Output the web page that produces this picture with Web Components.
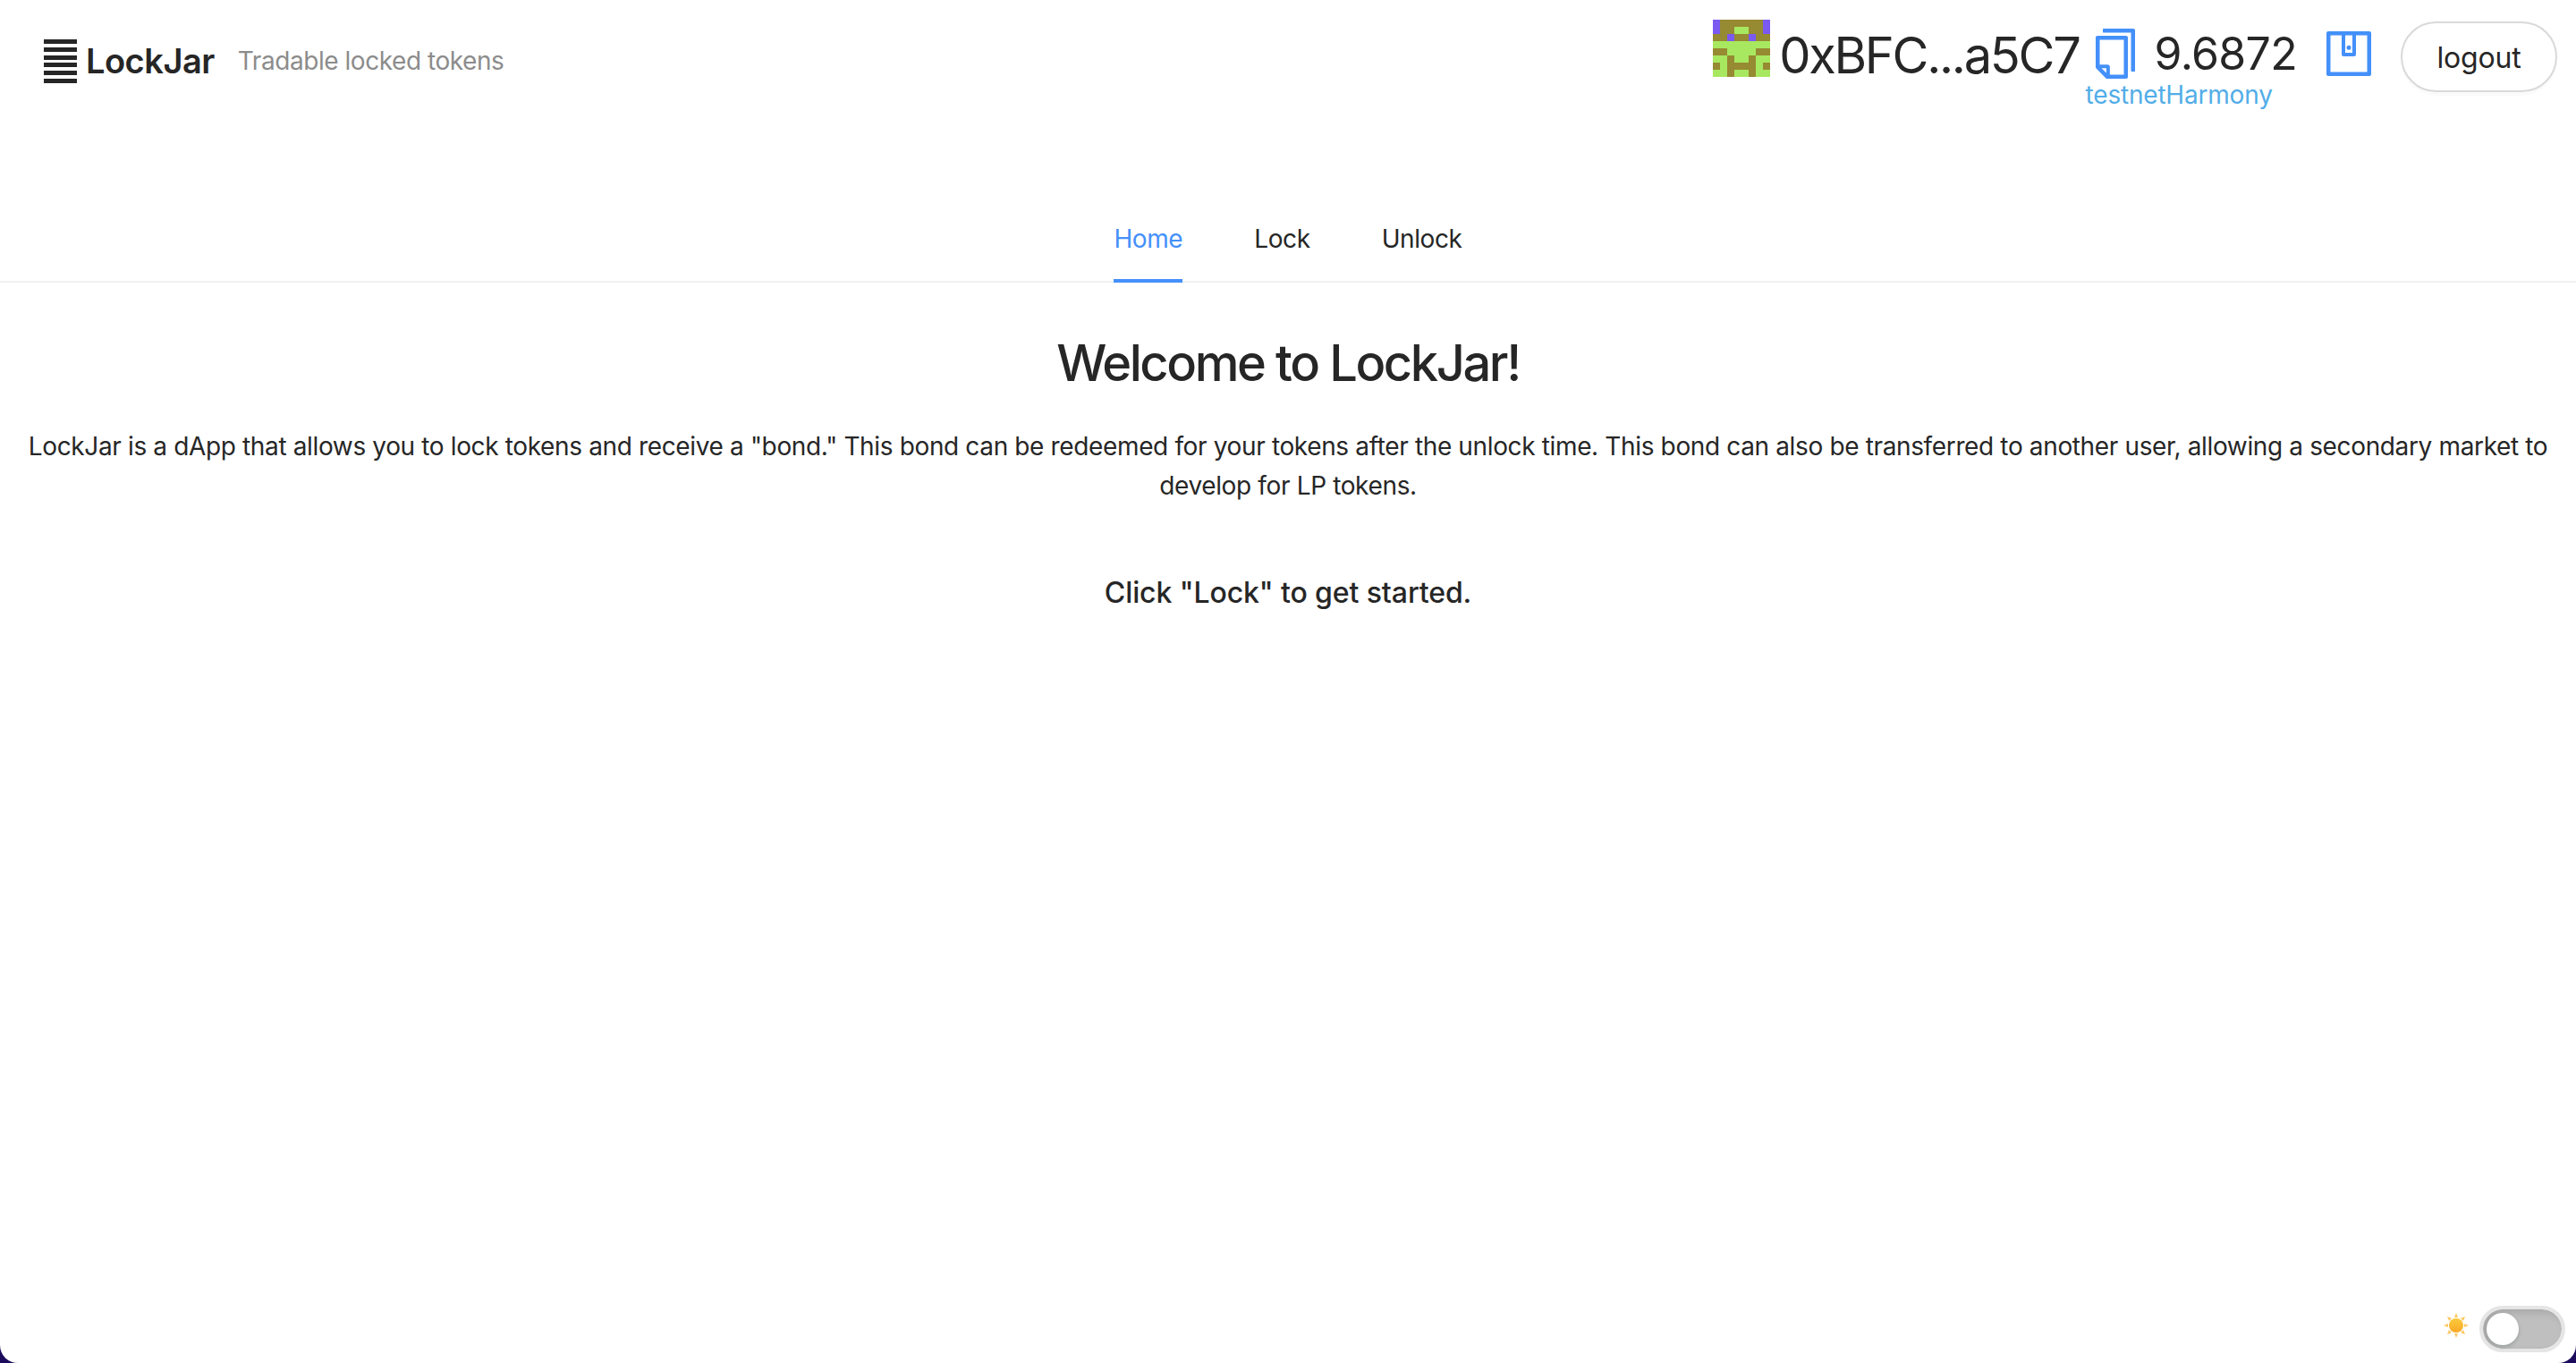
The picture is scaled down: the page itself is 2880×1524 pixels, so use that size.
<!DOCTYPE html>
<html>
<head>
<meta charset="utf-8">
<title>LockJar</title>
<style>
	html, body {
		margin: 0;
		height: 100%;
		background: #1c0b5c;
	}
	body {
		font-family: Inter, "Liberation Sans", sans-serif;
		color: #262626;
	}
</style>
</head>
<body>

<template id="jar-logo">
	<style>
		:host {
			display: flex;
			align-items: center;
		}
		.bars {
			display: flex;
			flex-direction: column;
			gap: 3.75px;
			width: 37px;
			margin-right: 10px;
		}
		.bars i {
			display: block;
			height: 5px;
			background: #262626;
		}
		.name {
			font-size: 38px;
			font-weight: 600;
			letter-spacing: -0.5px;
		}
		.tagline {
			font-size: 28px;
			color: #8c8c8c;
			letter-spacing: -0.45px;
			margin-left: 26px;
		}
	</style>
	<div class="bars"><i></i><i></i><i></i><i></i><i></i><i></i></div>
	<span class="name">LockJar</span>
	<span class="tagline">Tradable locked tokens</span>
</template>

<template id="jar-blockie">
	<style>
		:host {
			display: grid;
			grid-template-columns: repeat(8, 8px);
			grid-auto-rows: 8px;
			width: 64px;
			height: 64px;
		}
		i { display: block; }
		.p { background: #7a5af0; }
		.b { background: #968a32; }
		.g { background: #a8e860; }
	</style>
</template>

<template id="jar-account">
	<style>
		:host {
			display: flex;
			align-items: flex-start;
		}
		jar-blockie {
			margin-top: 22px;
			margin-right: 10px;
		}
		.address {
			font-size: 56px;
			line-height: 68px;
			letter-spacing: -2.3px;
			margin-top: 28px;
		}
		.copy {
			width: 56px;
			height: 56px;
			margin: 32px 0 0 12px;
			fill: #4490fa;
		}
		.funds {
			display: flex;
			flex-direction: column;
			margin-left: 16px;
		}
		.balance {
			font-size: 50px;
			line-height: 60px;
			letter-spacing: -0.7px;
			margin-top: 30px;
		}
		.network {
			font-size: 28px;
			line-height: 34px;
			letter-spacing: -0.2px;
			color: #52ade8;
			margin-left: -77px;
			margin-top: -1px;
		}
		.wallet {
			width: 56px;
			height: 56px;
			margin: 32px 0 0 30px;
			fill: #4490fa;
			transform: rotate(-90deg);
		}
		button {
			width: 175px;
			height: 79px;
			margin: 24px 0 0 30px;
			padding: 2px 0 0;
			border: 2px solid #d9d9d9;
			border-radius: 40px;
			background: #fff;
			font: 32px Inter, "Liberation Sans", sans-serif;
			letter-spacing: -0.2px;
			color: #262626;
			box-shadow: 0 4px 0 rgba(0, 0, 0, 0.015);
		}
	</style>
	<jar-blockie></jar-blockie>
	<span class="address">0xBFC...a5C7</span>
	<svg class="copy" viewBox="64 64 896 896"><path d="M832 64H296c-4.4 0-8 3.6-8 8v56c0 4.4 3.6 8 8 8h496v688c0 4.4 3.6 8 8 8h56c4.4 0 8-3.6 8-8V96c0-17.7-14.3-32-32-32zM704 192H192c-17.7 0-32 14.3-32 32v530.7c0 8.5 3.4 16.6 9.4 22.6l173.3 173.3c2.2 2.2 4.7 4 7.4 5.5v1.9h4.2c3.5 1.3 7.2 2 11 2H704c17.7 0 32-14.3 32-32V224c0-17.7-14.3-32-32-32zM350 856.2L263.9 770H350v86.2zM664 888H414V746c0-22.1-17.9-40-40-40H232V264h432v624z"/></svg>
	<div class="funds">
		<span class="balance">9.6872</span>
		<span class="network">testnetHarmony</span>
	</div>
	<svg class="wallet" viewBox="64 64 896 896"><path d="M880 112H144c-17.7 0-32 14.3-32 32v736c0 17.7 14.3 32 32 32h736c17.7 0 32-14.3 32-32V144c0-17.7-14.3-32-32-32zm-40 464H528V448h312v128zm0 264H184V184h656v200H496c-17.7 0-32 14.3-32 32v192c0 17.7 14.3 32 32 32h344v200zM580 512a40 40 0 1 0 80 0 40 40 0 1 0-80 0z"/></svg>
	<button>logout</button>
</template>

<template id="jar-header">
	<style>
		:host {
			display: flex;
			justify-content: space-between;
			align-items: flex-start;
			height: 136px;
			padding: 0 21px 0 49px;
		}
		.left {
			padding-top: 44px;
		}
	</style>
	<div class="left"><slot name="logo"></slot></div>
	<slot name="account"></slot>
</template>

<template id="jar-tabs">
	<style>
		:host {
			display: flex;
			justify-content: center;
			gap: 80px;
			margin-top: 92px;
			height: 86px;
			border-bottom: 2px solid #f0f0f0;
		}
	</style>
	<slot></slot>
</template>

<template id="jar-tab">
	<style>
		:host {
			display: block;
			height: 84px;
			font-size: 28px;
			line-height: 78px;
			letter-spacing: -0.4px;
			color: #262626;
		}
		:host([active]) {
			color: #4490fa;
			box-shadow: inset 0 -4px 0 #4490fa;
			height: 88px;
		}
	</style>
	<slot></slot>
</template>

<template id="jar-welcome">
	<style>
		:host {
			display: block;
			text-align: center;
			padding: 0 24px;
		}
		h2 {
			margin: 57px 0 0;
			font-size: 56px;
			line-height: 66px;
			font-weight: 500;
			letter-spacing: -2.4px;
		}
		p {
			margin: 38px 0 0;
			font-size: 28px;
			line-height: 44px;
			letter-spacing: -0.36px;
		}
		h4 {
			margin: 78px 0 0;
			font-size: 32px;
			line-height: 40px;
			font-weight: 500;
			letter-spacing: -0.1px;
		}
	</style>
	<h2><slot name="title"></slot></h2>
	<p><slot name="body"></slot></p>
	<h4><slot name="cta"></slot></h4>
</template>

<template id="jar-theme-switch">
	<style>
		:host {
			position: absolute;
			right: 12px;
			bottom: 12px;
			display: flex;
			align-items: center;
			gap: 12px;
		}
		svg {
			width: 28px;
			height: 28px;
			margin-top: -8px;
		}
		.track {
			display: block;
			box-sizing: border-box;
			width: 96px;
			height: 52px;
			padding: 4px;
			border-radius: 26px;
			background: #bfbfbf;
			background-clip: padding-box;
			border: 4px solid #e5e5e5;
			box-shadow: inset 4px 4px 8px rgba(0, 0, 0, 0.12);
		}
		.knob {
			display: block;
			width: 36px;
			height: 36px;
			border-radius: 50%;
			background: #fff;
			box-shadow: 0 2px 4px rgba(0, 35, 11, 0.2);
		}
	</style>
	<svg viewBox="0 0 28 28">
		<defs>
			<linearGradient id="sun" x1="0" y1="0" x2="0" y2="1">
				<stop offset="0" stop-color="#fbcb3c"/>
				<stop offset="1" stop-color="#f9a825"/>
			</linearGradient>
		</defs>
		<g fill="#fcc860">
			<polygon points="14,0 16,5 12,5"/>
			<polygon points="14,28 16,23 12,23"/>
			<polygon points="0,14 5,12 5,16"/>
			<polygon points="28,14 23,12 23,16"/>
			<polygon points="4,4 9,6 6,9"/>
			<polygon points="24,4 22,9 19,6"/>
			<polygon points="4,24 6,19 9,22"/>
			<polygon points="24,24 19,22 22,19"/>
		</g>
		<circle cx="14" cy="14" r="8" fill="url(#sun)"/>
	</svg>
	<span class="track"><span class="knob"></span></span>
</template>

<template id="jar-app">
	<style>
		:host {
			display: block;
			position: relative;
			height: 100vh;
			background: #fff;
			border-radius: 0 0 20px 20px;
			overflow: hidden;
		}
	</style>
	<slot></slot>
</template>

<script>
function define(name, setup) {
	const template = document.querySelector('#' + name)
	customElements.define(name, class extends HTMLElement {
		constructor() {
			super()
			this.root = this.attachShadow({mode: 'open'})
			this.root.appendChild(template.content.cloneNode(true))
			if(setup) setup(this.root)
		}
	})
}

const blockieRows = [
	'pbbbbbbp',
	'pbbggbbp',
	'bbpbbpbb',
	'gggggggg',
	'bbggggbb',
	'ggbggbgg',
	'bgbbbbgb',
	'ggbggbgg',
]

define('jar-blockie', root => {
	blockieRows.join('').split('').forEach(cell => {
		const i = document.createElement('i')
		i.className = cell
		root.appendChild(i)
	})
})
define('jar-logo')
define('jar-account')
define('jar-header')
define('jar-tab')
define('jar-tabs')
define('jar-welcome')
define('jar-theme-switch')
define('jar-app')
</script>

<jar-app>
	<jar-header>
		<jar-logo slot="logo"></jar-logo>
		<jar-account slot="account"></jar-account>
	</jar-header>
	<jar-tabs>
		<jar-tab active>Home</jar-tab>
		<jar-tab>Lock</jar-tab>
		<jar-tab>Unlock</jar-tab>
	</jar-tabs>
	<jar-welcome>
		<span slot="title">Welcome to LockJar!</span>
		<span slot="body">LockJar is a dApp that allows you to lock tokens and receive a "bond." This bond can be redeemed for your tokens after the unlock time. This bond can also be transferred to another user, allowing a secondary market to develop for LP tokens.</span>
		<span slot="cta">Click "Lock" to get started.</span>
	</jar-welcome>
	<jar-theme-switch></jar-theme-switch>
</jar-app>

</body>
</html>
